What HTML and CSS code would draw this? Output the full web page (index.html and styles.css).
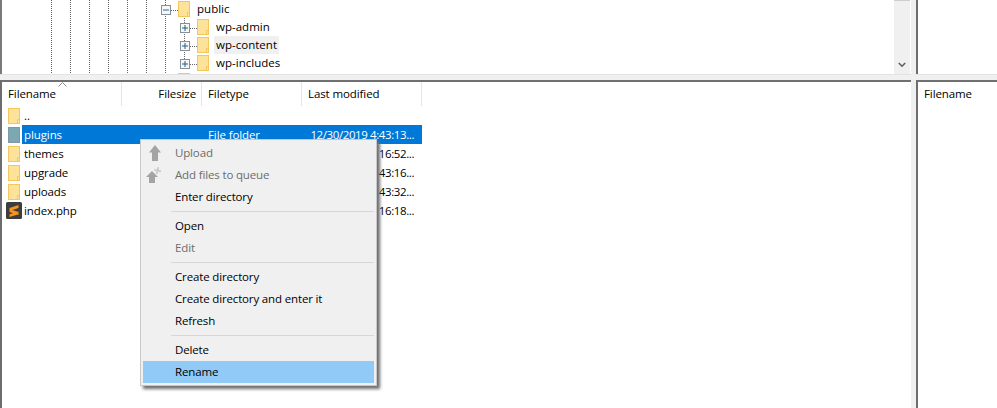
FILE: index.html
```html
<!DOCTYPE html>
<html lang="en">
<head>
<meta charset="utf-8">
<title>FileZilla</title>
<link rel="stylesheet" href="styles.css">
</head>
<body>
<svg width="0" height="0" class="defs">
  <defs>
    <symbol id="folder" viewBox="0 0 12 16">
      <rect x=".5" y=".5" width="11" height="15" fill="#fde39a" stroke="#f4c65c"/>
      <path d="M9.5 15.5v-4h2" fill="none" stroke="#f4c65c"/>
    </symbol>
    <symbol id="folder-sel" viewBox="0 0 12 16">
      <rect x=".5" y=".5" width="11" height="15" fill="#7da8b3" stroke="#7f98a3"/>
    </symbol>
    <symbol id="plus" viewBox="0 0 10 10">
      <rect x=".5" y=".5" width="9" height="9" fill="#f6f7f8" stroke="#8a8f96"/>
      <path d="M2 5h6M5 2v6" stroke="#1f5f8b" fill="none"/>
    </symbol>
    <symbol id="minus" viewBox="0 0 10 10">
      <rect x=".5" y=".5" width="9" height="9" fill="#f6f7f8" stroke="#8a8f96"/>
      <path d="M2 5h6" stroke="#1f6fa8" fill="none"/>
    </symbol>
  </defs>
</svg>
<div class="app">
  <section class="panel tree">
    <div class="tree-row level-1">
      <svg class="box"><use href="#minus"/></svg><i class="dots"></i>
      <svg class="folder"><use href="#folder"/></svg><span class="tree-label">public</span>
    </div>
    <div class="tree-row level-2">
      <svg class="box"><use href="#plus"/></svg><i class="dots"></i>
      <svg class="folder"><use href="#folder"/></svg><span class="tree-label">wp-admin</span>
    </div>
    <div class="tree-row level-2">
      <svg class="box"><use href="#plus"/></svg><i class="dots"></i>
      <svg class="folder"><use href="#folder"/></svg><span class="tree-label current">wp-content</span>
    </div>
    <div class="tree-row level-2">
      <svg class="box"><use href="#plus"/></svg><i class="dots"></i>
      <svg class="folder"><use href="#folder"/></svg><span class="tree-label">wp-includes</span>
    </div>
    <div class="tree-row level-1 last">
      <span class="box"></span><span class="spacer"></span>
      <svg class="folder"><use href="#folder"/></svg>
    </div>
    <div class="scrollbar">
      <span class="thumb"></span>
      <svg class="chevron" viewBox="0 0 8 6"><path d="M.8 1l3.2 3.2L7.2 1" fill="none" stroke="#606060" stroke-width="1.6"/></svg>
    </div>
  </section>
  <div class="gap-v"></div>
  <section class="panel side-top"></section>
  <div class="gap-h"></div>
  <div class="gap-x"></div>
  <div class="gap-h"></div>
  <section class="panel files">
    <div class="head">
      <span class="col col-name">Filename<svg class="sort" viewBox="0 0 9 5"><path d="M.5 4.5l4-4 4 4" fill="none" stroke="#8a8a8a"/></svg></span>
      <span class="col col-size">Filesize</span>
      <span class="col col-type">Filetype</span>
      <span class="col col-date">Last modified</span>
    </div>
    <div class="row">
      <svg class="icon"><use href="#folder"/></svg>
      <div class="cells"><span class="name">..</span></div>
    </div>
    <div class="row selected">
      <svg class="icon"><use href="#folder-sel"/></svg>
      <div class="cells"><span class="name">plugins</span><span></span><span class="type">File folder</span><span class="date">12/30/2019 4:43:13...</span></div>
    </div>
    <div class="row">
      <svg class="icon"><use href="#folder"/></svg>
      <div class="cells"><span class="name">themes</span><span></span><span></span><span class="date">16:52...</span></div>
    </div>
    <div class="row">
      <svg class="icon"><use href="#folder"/></svg>
      <div class="cells"><span class="name">upgrade</span><span></span><span></span><span class="date">43:16...</span></div>
    </div>
    <div class="row">
      <svg class="icon"><use href="#folder"/></svg>
      <div class="cells"><span class="name">uploads</span><span></span><span></span><span class="date">43:32...</span></div>
    </div>
    <div class="row">
      <svg class="icon wide" viewBox="0 0 16 17">
        <rect width="16" height="17" rx="1.5" fill="#3d3d3d"/>
        <path d="M12.5 3v3L3.5 9V6zM3.5 7l9 3v3l-9-3zM12.5 9.5v2.8L3.5 15v-2.8z" fill="#f7941d"/>
      </svg>
      <div class="cells"><span class="name">index.php</span><span></span><span></span><span class="date">16:18...</span></div>
    </div>
  </section>
  <div class="gap-v"></div>
  <section class="panel side-bottom">
    <div class="head"><span class="col">Filename</span></div>
  </section>
</div>

<div class="menu">
  <div class="item disabled">
    <svg class="menu-icon" viewBox="0 0 16 16"><path d="M8 0l6 7.5h-3V16H5V7.5H2z" fill="#a3a3a3"/></svg>Upload
  </div>
  <div class="item disabled">
    <svg class="menu-icon add" viewBox="0 0 16 16"><path d="M6 4l6 6H9v6H3v-6H0z" fill="#a3a3a3"/><path d="M11.5 0l1.6.5-.6 2.4 2.6.6-.4 1.8-2.6-.6-.7 2.5-1.7-.5.7-2.5-2.4-.6.4-1.7 2.4.6z" fill="#c9c9c9"/></svg>Add files to queue
  </div>
  <div class="item">Enter directory</div>
  <div class="sep"></div>
  <div class="item">Open</div>
  <div class="item disabled">Edit</div>
  <div class="sep"></div>
  <div class="item">Create directory</div>
  <div class="item">Create directory and enter it</div>
  <div class="item">Refresh</div>
  <div class="sep"></div>
  <div class="item">Delete</div>
  <div class="item active">Rename</div>
</div>
</body>
</html>
```

FILE: styles.css
```css
* { box-sizing: border-box; }
html, body { margin: 0; height: 100%; overflow: hidden; background: #fff; }
body {
  font-family: "Open Sans", "Noto Sans", "Liberation Sans", sans-serif;
  font-size: 11.5px;
  letter-spacing: -0.1px;
  color: #000;
  position: relative;
}
.defs { position: absolute; }

.app {
  display: grid;
  grid-template-columns: 911px 5px 81px;
  grid-template-rows: 74px 6px 328px;
  width: 997px;
  height: 408px;
  background: #f0f0f0;
}
.gap-h { background: #f0f0f0; border-top: 1px solid #e3e3e3; }
.gap-v, .gap-x { background: #f0f0f0; }

.panel { background: #fff; border-left: 2px solid #6d6d6d; overflow: hidden; position: relative; }
.files, .side-bottom { border-top: 2px solid #707070; }

/* remote tree */
.tree {
  border-left-color: #7a7a7a;
  background-color: #fff;
  --dot: repeating-linear-gradient(to bottom, #666 0 1px, transparent 1px 2px);
  background-image: var(--dot), var(--dot), var(--dot), var(--dot), var(--dot), var(--dot), var(--dot), var(--dot);
  background-size: 1px 100%, 1px 100%, 1px 100%, 1px 100%, 1px 100%, 1px 100%, 1px 100%, 1px 46px;
  background-position: 49px 0, 68px 0, 87px 0, 106px 0, 125px 0, 144px 0, 163px 0, 182px 18px;
  background-repeat: no-repeat;
}
.tree-row { display: flex; align-items: center; height: 18px; }
.level-1 { padding-left: 159px; }
.level-2 { padding-left: 178px; }
.box { width: 10px; height: 10px; flex: none; margin-top: 2px; }
.spacer { width: 7px; flex: none; }
.dots {
  width: 7px;
  height: 1px;
  flex: none;
  margin-top: 2px;
  background: repeating-linear-gradient(to right, #666 0 1px, transparent 1px 2px);
}
.folder { width: 12px; height: 16px; flex: none; }
.tree-label { margin-left: 5px; padding: 0 2px; line-height: 18px; letter-spacing: 0.02px; }
.current { background: #f0f0f0; }

.scrollbar {
  position: absolute;
  top: 0;
  right: 1px;
  bottom: 0;
  width: 16px;
  background: #f0f0f0;
  display: flex;
  flex-direction: column;
  align-items: center;
}
.thumb { width: 100%; height: 1px; background: #cdcdcd; }
.chevron { width: 8px; height: 6px; margin-top: auto; margin-bottom: 6px; }

/* file list */
.head { display: flex; height: 24px; align-items: center; }
.col {
  height: 100%;
  display: flex;
  align-items: center;
  padding-left: 6px;
  padding-bottom: 2px;
  border-right: 1px solid #e5e5e5;
  position: relative;
}
.side-bottom .col { border-right: 0; }
.col-name { width: 120px; }
.col-size { width: 80px; justify-content: flex-end; padding-right: 5px; }
.col-type { width: 100px; }
.col-date { width: 120px; }
.sort { position: absolute; left: 56px; top: 0; width: 9px; height: 5px; }

.row { display: flex; align-items: center; height: 19px; padding-left: 6px; }
.icon { width: 12px; height: 16px; flex: none; margin-right: 2px; }
.icon.wide { width: 16px; height: 17px; margin: 0 0 0 -2px; }
.cells {
  display: grid;
  grid-template-columns: 100px 80px 100px 120px;
  width: 400px;
  height: 100%;
  align-items: center;
  white-space: nowrap;
}
.name { padding-left: 2px; }
.type { padding-left: 6px; }
.date { padding-right: 8px; text-align: right; overflow: hidden; letter-spacing: -0.4px; }
.selected .cells { background: #0078d7; color: #fff; }

/* context menu */
.menu {
  position: absolute;
  left: 140px;
  top: 139px;
  width: 237px;
  padding: 2px;
  background: #f0f0f0;
  border: 1px solid #c8c8c8;
  box-shadow: 3px 3px 3px #6e6e6e;
  letter-spacing: -0.15px;
}
.item {
  position: relative;
  height: 22px;
  line-height: 22px;
  padding-left: 32px;
  white-space: nowrap;
}
.item.disabled { color: #6d6d6d; }
.item.active { background: #91c9f7; }
.menu-icon { position: absolute; left: 4px; top: 3px; width: 16px; height: 16px; }
.menu-icon.add { left: 3px; top: 3px; }
.sep { height: 7px; margin-left: 28px; padding-top: 3px; }
.sep::before { content: ""; display: block; height: 1px; background: #d7d7d7; }
```
